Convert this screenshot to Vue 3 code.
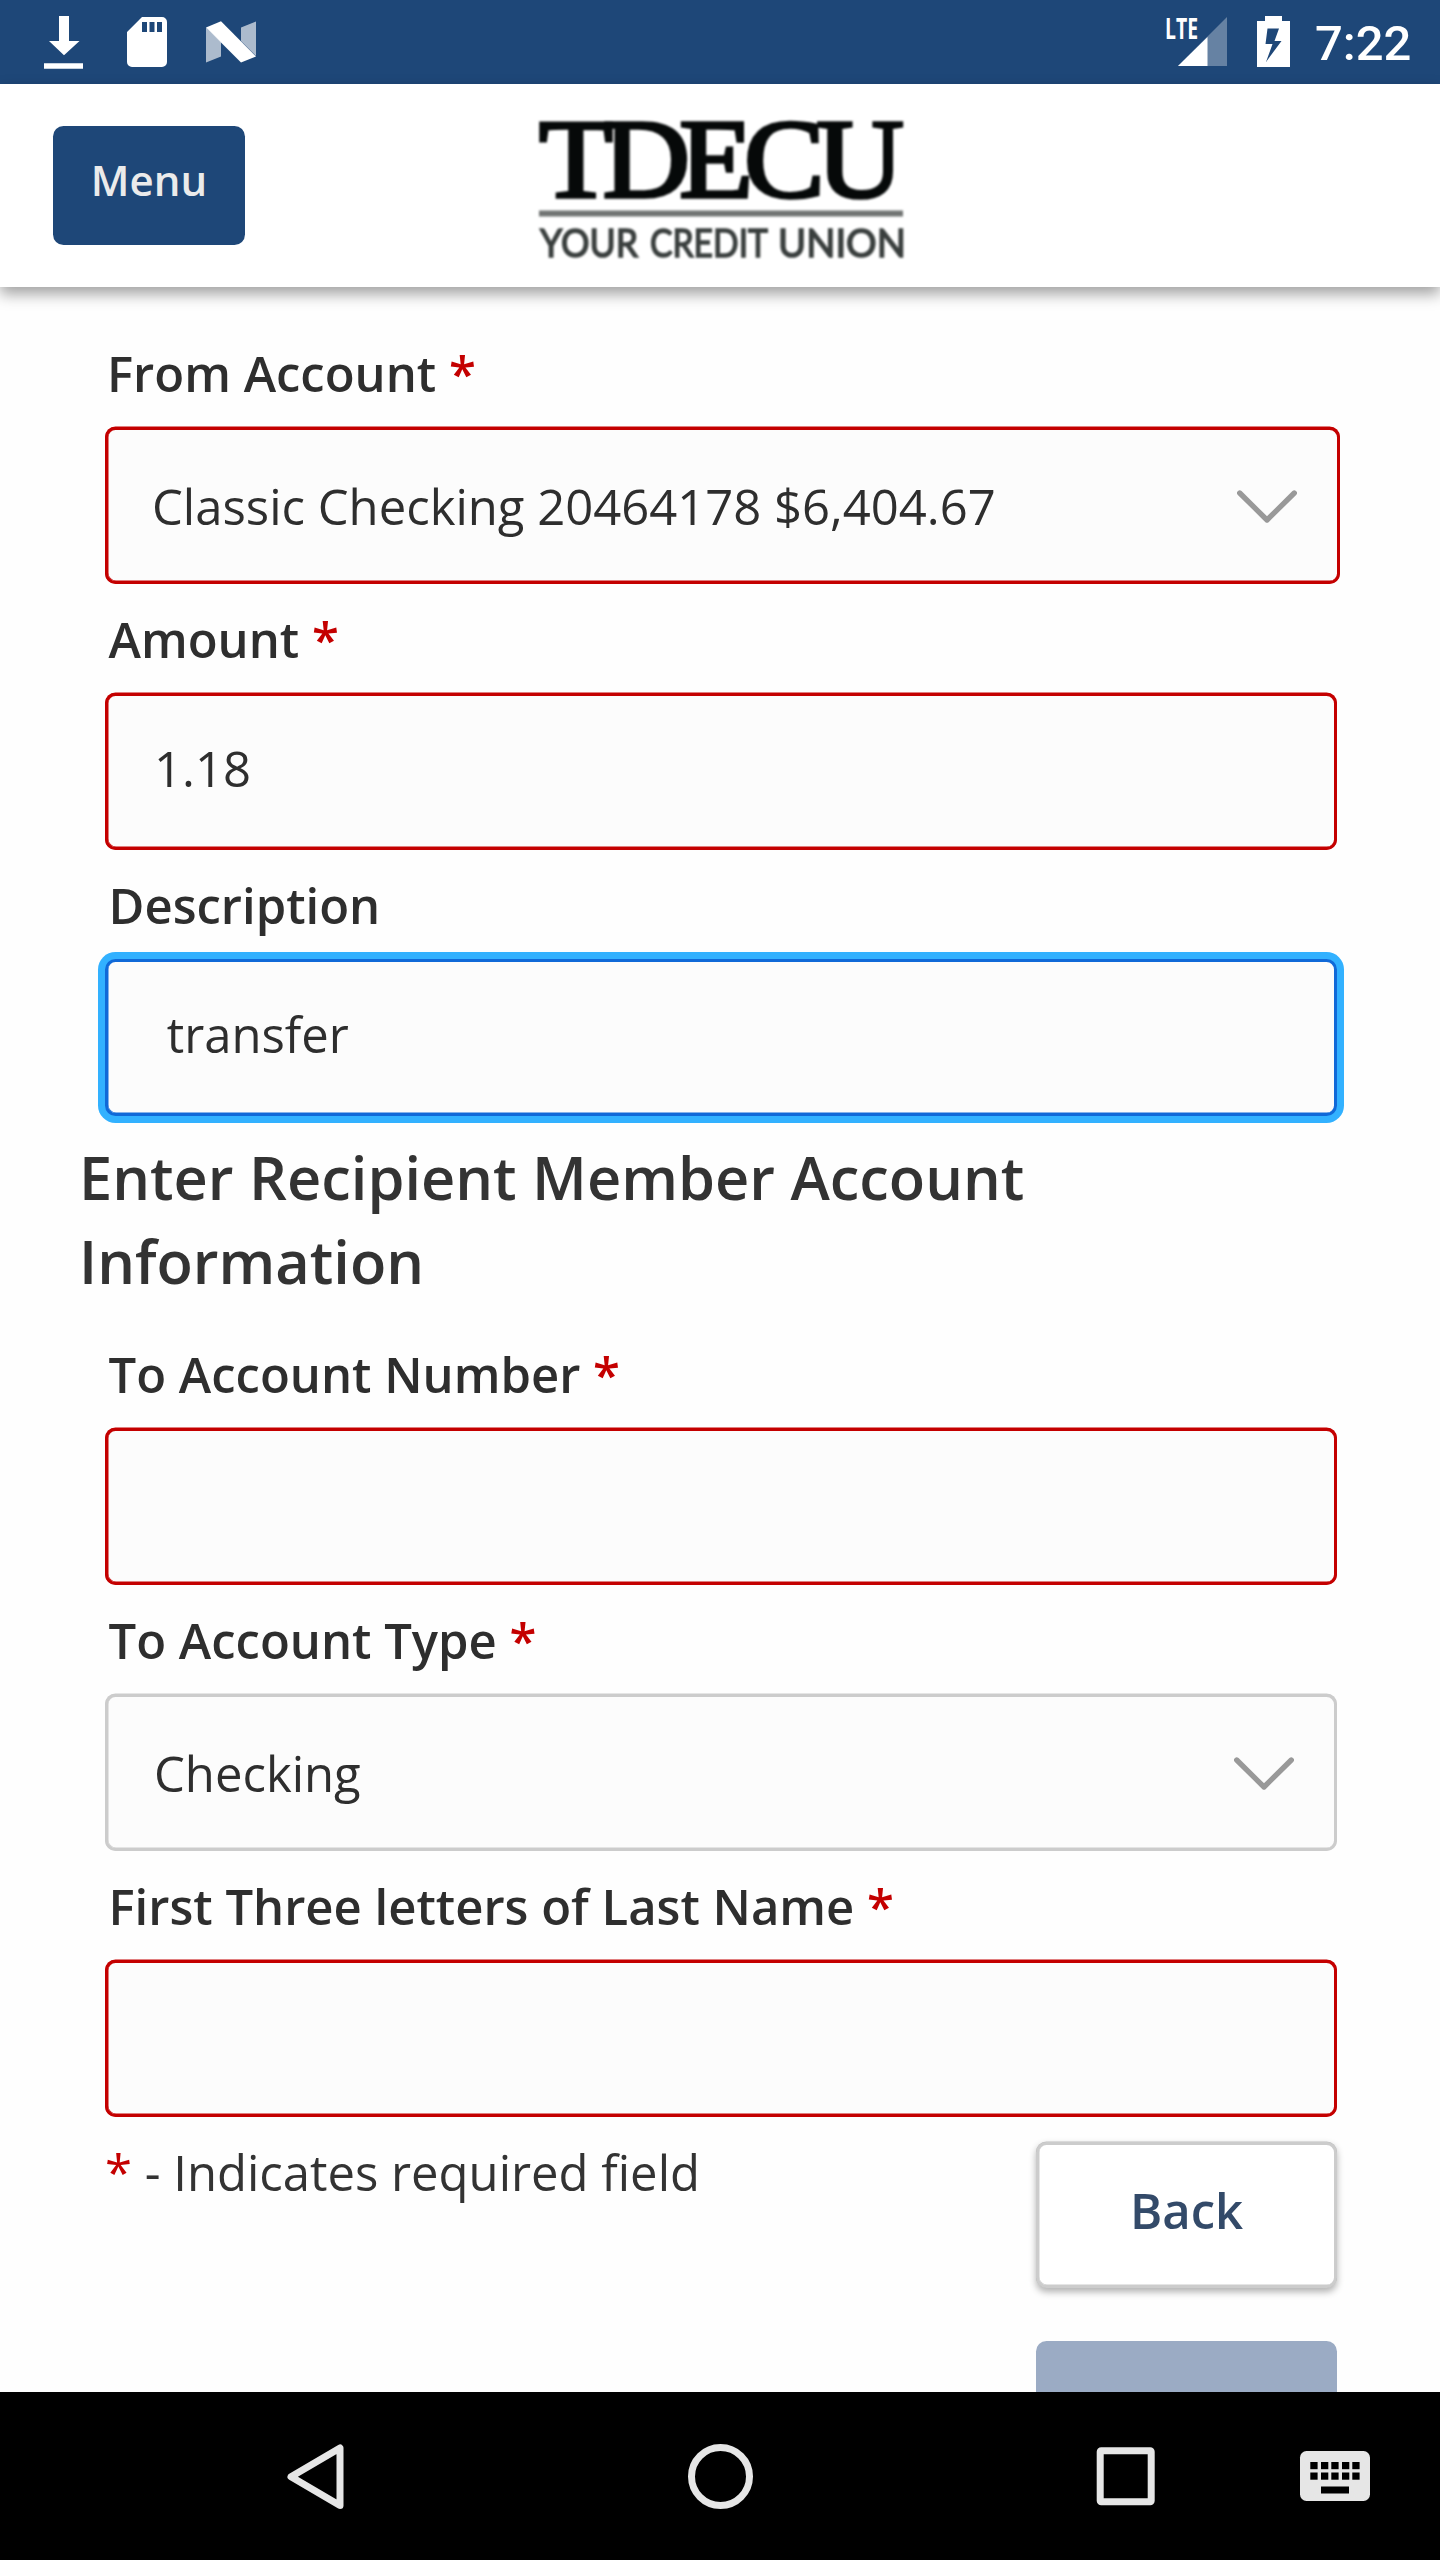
<script setup>
const transferFields = [
  { label: 'From Account', required: true, value: 'Classic Checking 20464178 $6,404.67', kind: 'select', state: 'invalid', wide: true },
  { label: 'Amount', required: true, value: '1.18', kind: 'input', state: 'invalid' },
  { label: 'Description', required: false, value: ' transfer', kind: 'input', state: 'focused' },
]
const recipientFields = [
  { label: 'To Account Number', required: true, value: '', kind: 'input', state: 'invalid' },
  { label: 'To Account Type', required: true, value: 'Checking', kind: 'select', state: 'normal' },
  { label: 'First Three letters of Last Name', required: true, value: '', kind: 'input', state: 'invalid' },
]
const groups = [
  { title: '', fields: transferFields },
  { title: 'Enter Recipient Member Account Information', fields: recipientFields },
]
const keyColumns = [10.3, 21, 31.3, 42, 52.3]
</script>

<template>
  <div class="screen">
    <div class="status-bar">
      <svg class="status-left" width="260" height="84" viewBox="0 0 260 84">
        <g fill="#fff">
          <path d="M59 16h10v25h10.500L64 55.200 49 41h10z" />
          <path d="M44 63.300h39v5.500H44z" />
          <path fill-rule="evenodd" d="M142 17h20a5 5 0 0 1 5 5v40a5 5 0 0 1-5 5h-30a5 5 0 0 1-5-5V32zM142 22v10h5V22zM149.500 22v10h5V22zM157 22v10h5V22z" />
          <path d="M206 27.500V62.500L221 56.500V42zM241 27.500L256 21.500V56L241 41z" opacity=".63" />
          <path d="M206 27.500L221 21.200 256 56.500 241 62.600z" />
        </g>
      </svg>
      <div class="status-right">
        <svg width="130" height="84" viewBox="0 0 130 84">
          <path d="M67 17v49H18z" fill="#fff" opacity=".32" />
          <path d="M47.500 37v29H18z" fill="#fff" />
          <text class="lte" x="5" y="39" textLength="33" lengthAdjust="spacingAndGlyphs">LTE</text>
          <path fill="#fff" fill-rule="evenodd" d="M105 16h17v5h8v46H97V21h8zM107.500 28.500L105.500 44h7L106 62 121.500 41h-7L119 28.500z" />
        </svg>
        <span class="clock">7:22</span>
      </div>
    </div>

    <header class="app-header">
      <div class="menu-btn">Menu</div>
      <svg class="logo" width="384" height="203" viewBox="-10 -35 384 203">
        <text class="logo-name" transform="scale(1.07 1)" x="0 59.6 131 191.6 259.4" y="77.500">TDECU</text>
        <rect x="0" y="91.500" width="364" height="6" fill="#717473" />
        <text class="logo-tag" y="138">
          <tspan x="1" textLength="98" lengthAdjust="spacingAndGlyphs">YOUR</tspan>
          <tspan x="111" textLength="118" lengthAdjust="spacingAndGlyphs">CREDIT</tspan>
          <tspan x="239" textLength="128" lengthAdjust="spacingAndGlyphs">UNION</tspan>
        </text>
      </svg>
    </header>

    <main class="form">
      <section v-for="(group, g) in groups" :key="g">
        <h2 v-if="group.title" class="heading">{{ group.title }}</h2>
        <div v-for="field in group.fields" :key="field.label" class="field" :class="{ wide: field.wide }">
          <div class="label">{{ field.label }}<span v-if="field.required" class="star"> *</span></div>
          <div class="control" :class="[field.kind, field.state]">
            <span class="value">{{ field.value }}</span>
            <svg v-if="field.kind === 'select'" class="chevron" width="60" height="33" viewBox="0 0 60 33">
              <path d="M2.700 3L30 30 57.300 3" />
            </svg>
          </div>
        </div>
      </section>
      <div class="footer">
        <div class="note"><span class="star">*</span> - Indicates required field</div>
        <div class="actions">
          <div class="back-btn">Back</div>
          <div class="next-btn"></div>
        </div>
      </div>
    </main>

    <nav class="nav-bar">
      <svg width="1440" height="168" viewBox="0 0 1440 168">
        <g fill="none" stroke="#e6e6e6" stroke-width="7" stroke-linejoin="round">
          <path d="M340 56v57.500L291 84.700z" />
          <circle cx="720.500" cy="84.500" r="29" />
          <rect x="1100.200" y="58.800" width="51" height="51" rx="1" />
        </g>
        <g transform="translate(1300 59)">
          <rect width="70" height="50" rx="6.500" fill="#e6e6e6" />
          <template v-for="x in keyColumns" :key="x">
            <rect :x="x" y="11" width="7.300" height="7.200" />
            <rect :x="x" y="21.500" width="7.300" height="7.200" />
          </template>
          <rect x="21" y="35.500" width="28" height="7" />
        </g>
      </svg>
    </nav>
  </div>
</template>

<style>
body { margin: 0; background: #fefefe; }
</style>

<style scoped>
.screen {
  width: 1440px;
  height: 2560px;
  display: flex;
  flex-direction: column;
  overflow: hidden;
  background: #fefefe;
  color: #2e2e2e;
  font-family: "Open Sans", "Noto Sans", sans-serif;
  font-size: 49px;
}
svg { display: block; flex: none; }
.status-bar {
  height: 84px;
  flex: none;
  display: flex;
  justify-content: space-between;
  background: #1e4778;
}
.status-right { display: flex; width: 280px; }
.lte { font: 700 29px "Open Sans", sans-serif; fill: #fff; }
.clock {
  margin-left: 25px;
  color: #fff;
  font: 500 49px/88px Roboto, sans-serif;
}
.app-header {
  position: relative;
  z-index: 1;
  height: 203px;
  flex: none;
  display: flex;
  align-items: flex-start;
  background: #fff;
  box-shadow: 0 7px 14px rgba(0, 0, 0, .37);
}
.menu-btn {
  box-sizing: border-box;
  width: 192px;
  height: 119px;
  margin: 42px 0 0 53px;
  border-radius: 10.5px;
  background: #1e4778;
  color: #ebebeb;
  font-size: 42px;
  font-weight: 600;
  line-height: 108px;
  text-align: center;
}
.logo { margin-left: 284px; filter: blur(.9px); }
.logo-name {
  font: 400 113px "Liberation Serif", serif;
  fill: #060909;
  stroke: #060909;
  stroke-width: 3.6px;
}
.logo-tag { font: 400 39.5px Lato, sans-serif; fill: #3a3f3e; stroke: #3a3f3e; stroke-width: 1.6px; }
.form {
  flex: 1;
  min-height: 0;
  overflow: hidden;
  padding: 31px 103px 0 105px;
}
.label {
  height: 109px;
  padding-left: 3.5px;
  line-height: 110px;
  font-weight: 600;
  white-space: pre;
}
.wide .label { padding-left: 2px; }
.star { color: #c40000; }
.control {
  --edge: #c40000;
  box-sizing: border-box;
  height: 157px;
  display: flex;
  align-items: center;
  justify-content: space-between;
  padding: 2px 40px 0 46px;
  border: 3px solid var(--edge);
  border-radius: 10.5px;
  background: #fcfcfc;
  box-shadow: 0 -.5px 0 var(--edge), inset .5px -.5px 0 var(--edge);
}
.wide .control { margin-right: -3px; padding-left: 44px; }
.value { line-height: 67px; white-space: pre; }
.input .value { margin-top: -8px; }
.normal { --edge: #ccc; }
.focused {
  --edge: #1069d8;
  box-shadow: 0 0 0 7px #32b1ff, inset .5px -.5px 0 var(--edge);
}
.chevron path {
  fill: none;
  stroke: #999;
  stroke-width: 5.3;
  stroke-linecap: round;
  stroke-linejoin: round;
}
.heading {
  margin: 0 0 0 -26px;
  padding: 19px 0 16px;
  font-size: 59.5px;
  font-weight: 600;
  line-height: 84px;
  color: #333;
}
.footer { display: flex; justify-content: space-between; }
.note { padding-top: 22px; line-height: 67px; color: #333; }
.actions { width: 301px; padding-top: 25px; }
.back-btn {
  box-sizing: border-box;
  height: 146px;
  border: 3px solid #ccc;
  border-radius: 10.5px;
  background: #fff;
  box-shadow: 0 3.5px 7px rgba(0, 0, 0, .3), 0 -.5px 0 #ccc, inset .5px -.5px 0 #ccc;
  color: #334a69;
  font-weight: 600;
  line-height: 130px;
  text-align: center;
}
.next-btn {
  height: 146px;
  margin-top: 53px;
  border-radius: 10.5px;
  background: #9babc4;
}
.nav-bar { height: 168px; flex: none; background: #000; }
</style>
